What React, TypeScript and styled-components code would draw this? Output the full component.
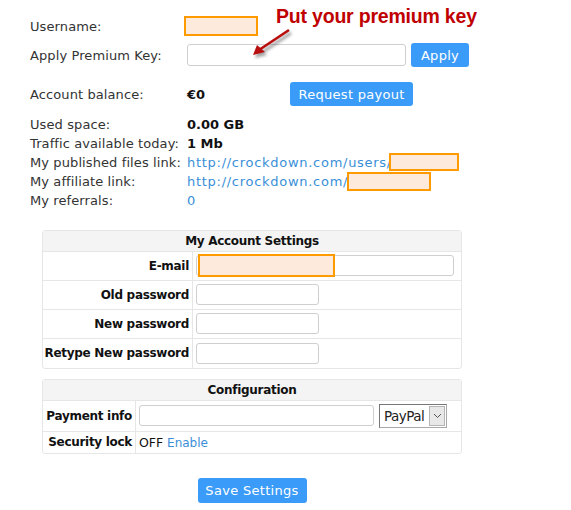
import React from "react";
import styled, { createGlobalStyle } from "styled-components";

const GlobalStyle = createGlobalStyle`
  html, body { margin: 0; padding: 0; background: #fff; }
  body {
    font-family: "DejaVu Sans", "Noto Sans", sans-serif;
    font-size: 13px;
    color: #333;
  }
`;

const Page = styled.div`
  position: relative;
  width: 571px;
  height: 510px;
  padding: 12px 0 0 30px;
  box-sizing: border-box;
  overflow: hidden;
`;

const Row = styled.div<{ $h: number; $mt?: number }>`
  display: flex;
  align-items: center;
  height: ${(p) => p.$h}px;
  margin-top: ${(p) => p.$mt ?? 0}px;
`;

const Label = styled.div`
  width: 157px;
  flex: none;
  white-space: nowrap;
  letter-spacing: 0.1px;
`;

const Value = styled.div<{ $bold?: boolean }>`
  display: flex;
  align-items: center;
  white-space: nowrap;
  font-weight: ${(p) => (p.$bold ? 700 : 400)};
  color: ${(p) => (p.$bold ? "#111" : "inherit")};
`;

const Link = styled.a<{ $wide?: boolean }>`
  color: #3a8fd8;
  text-decoration: none;
  white-space: nowrap;
  letter-spacing: ${(p) => (p.$wide ? "0.72px" : "0")};
`;

const Redact = styled.span<{ $w: number; $h: number; $ml?: number }>`
  display: inline-block;
  width: ${(p) => p.$w}px;
  height: ${(p) => p.$h}px;
  margin-left: ${(p) => p.$ml ?? 0}px;
  box-sizing: border-box;
  border: 2px solid #ff9a00;
  background: #fdeadd;
`;

const TextInput = styled.input<{ $w: number; $h?: number }>`
  width: ${(p) => p.$w}px;
  height: ${(p) => p.$h ?? 21}px;
  box-sizing: border-box;
  border: 1px solid #cfcfcf;
  border-radius: 3px;
  background: #fff;
  padding: 0 4px;
  margin: 0;
  font: inherit;
`;

const Button = styled.button<{ $w: number; $h: number }>`
  width: ${(p) => p.$w}px;
  height: ${(p) => p.$h}px;
  border: none;
  border-radius: 3px;
  background: #3b9bf8;
  color: #fff;
  font-family: "DejaVu Sans", sans-serif;
  font-size: 13px;
  letter-spacing: 0.3px;
  padding: 0;
  cursor: pointer;
`;

const Annotation = styled.div`
  position: absolute;
  left: 276px;
  top: 5px;
  font-family: "Liberation Sans", Arial, sans-serif;
  font-weight: 700;
  font-size: 19.5px;
  color: #c00000;
  letter-spacing: -0.2px;
`;

const ArrowSvg = styled.svg`
  position: absolute;
  left: 245px;
  top: 25px;
  overflow: visible;
`;

const Panel = styled.table<{ $mt: number }>`
  width: 420px;
  margin: ${(p) => p.$mt}px 0 0 12px;
  border-collapse: separate;
  border-spacing: 0;
  border: 1px solid #e6e6e6;
  border-radius: 3px;
  font-size: 12px;
  letter-spacing: -0.3px;
`;

const HeadCell = styled.th`
  height: 20px;
  padding: 0;
  background: #f4f4f4;
  color: #111;
  font-weight: 700;
  font-size: 12px;
  text-align: center;
  border-bottom: 1px solid #e6e6e6;
`;

const LabelCell = styled.td<{ $w: number; $h: number; $last?: boolean }>`
  width: ${(p) => p.$w}px;
  height: ${(p) => p.$h}px;
  padding: 0 3px 0 0;
  box-sizing: border-box;
  text-align: right;
  font-weight: 700;
  color: #111;
  white-space: nowrap;
  border-right: 1px solid #e6e6e6;
  border-bottom: ${(p) => (p.$last ? "none" : "1px solid #e6e6e6")};
`;

const FieldCell = styled.td<{ $last?: boolean }>`
  padding: 0 0 0 3px;
  white-space: nowrap;
  letter-spacing: 0;
  border-bottom: ${(p) => (p.$last ? "none" : "1px solid #e6e6e6")};
`;

const FieldLine = styled.div`
  position: relative;
  display: flex;
  align-items: center;
  gap: 5px;
`;

const EmailCover = styled(Redact)`
  position: absolute;
  left: 2px;
  top: -1px;
`;

const SelectWrap = styled.div`
  position: relative;
  width: 68px;
  height: 24px;
`;

const Select = styled.select`
  appearance: none;
  width: 68px;
  height: 24px;
  box-sizing: border-box;
  border: 1px solid #a9a9a9;
  border-top-color: #777;
  border-left-color: #777;
  background: #fff;
  font-family: "DejaVu Sans", sans-serif;
  font-size: 13.5px;
  color: #222;
  padding: 0 0 0 4px;
  margin: 0;
  letter-spacing: -0.5px;
`;

const SelectArrow = styled.span`
  position: absolute;
  right: 2px;
  top: 2px;
  width: 16px;
  height: 20px;
  box-sizing: border-box;
  border: 1px solid #b5b5b5;
  background: #e8e8e8;
  display: flex;
  align-items: center;
  justify-content: center;
  pointer-events: none;
`;

const Off = styled.span`
  color: #111;
  font-size: 12.5px;
`;

const SaveRow = styled.div`
  width: 420px;
  margin: 24px 0 0 12px;
  display: flex;
  justify-content: center;
`;

export default function App() {
  return (
    <>
      <GlobalStyle />
      <Page>
        <Annotation>Put your premium key</Annotation>
        <ArrowSvg width="50" height="36" viewBox="0 0 50 36">
          <defs>
            <filter id="sh" x="-50%" y="-50%" width="200%" height="200%">
              <feGaussianBlur stdDeviation="1.6" />
            </filter>
          </defs>
          <g transform="translate(2,3)" filter="url(#sh)" opacity="0.55">
            <line x1="44" y1="5" x2="14" y2="25" stroke="#555" strokeWidth="3" />
            <polygon points="8,30 12,20 20,27" fill="#555" />
          </g>
          <line x1="44" y1="5" x2="14" y2="25" stroke="#b80f0f" strokeWidth="2.6" />
          <polygon points="8,30 12,20 20,27" fill="#b80f0f" />
        </ArrowSvg>

        <Row $h={28}>
          <Label>Username:</Label>
          <Value>
            <Redact $w={74} $h={20} $ml={-3} />
          </Value>
        </Row>
        <Row $h={30}>
          <Label>Apply Premium Key:</Label>
          <Value>
            <TextInput $w={219} $h={22} />
            <Button $w={58} $h={24} style={{ marginLeft: 5 }}>
              Apply
            </Button>
          </Value>
        </Row>
        <Row $h={24} $mt={12}>
          <Label>Account balance:</Label>
          <Value $bold>€0</Value>
          <Button $w={123} $h={24} style={{ marginLeft: 85 }}>
            Request payout
          </Button>
        </Row>
        <Row $h={19} $mt={8.5}>
          <Label>Used space:</Label>
          <Value $bold>0.00 GB</Value>
        </Row>
        <Row $h={19}>
          <Label>Traffic available today:</Label>
          <Value $bold>1 Mb</Value>
        </Row>
        <Row $h={19}>
          <Label>My published files link:</Label>
          <Value>
            <Link href="#" $wide>http://crockdown.com/users/</Link>
            <Redact $w={70} $h={18} $ml={-3} />
          </Value>
        </Row>
        <Row $h={19}>
          <Label>My affiliate link:</Label>
          <Value>
            <Link href="#" $wide>http://crockdown.com/f</Link>
            <Redact $w={84} $h={19} $ml={-6} />
          </Value>
        </Row>
        <Row $h={19}>
          <Label>My referrals:</Label>
          <Value>
            <Link href="#">0</Link>
          </Value>
        </Row>

        <Panel $mt={20}>
          <thead>
            <tr>
              <HeadCell colSpan={2}>My Account Settings</HeadCell>
            </tr>
          </thead>
          <tbody>
            <tr>
              <LabelCell $w={150} $h={29}>E-mail</LabelCell>
              <FieldCell>
                <FieldLine>
                  <TextInput $w={258} />
                  <EmailCover $w={137} $h={23} />
                </FieldLine>
              </FieldCell>
            </tr>
            <tr>
              <LabelCell $w={150} $h={29}>Old password</LabelCell>
              <FieldCell>
                <TextInput type="password" $w={123} />
              </FieldCell>
            </tr>
            <tr>
              <LabelCell $w={150} $h={29}>New password</LabelCell>
              <FieldCell>
                <TextInput type="password" $w={123} />
              </FieldCell>
            </tr>
            <tr>
              <LabelCell $w={150} $h={29} $last>
                Retype New password
              </LabelCell>
              <FieldCell $last>
                <TextInput type="password" $w={123} />
              </FieldCell>
            </tr>
          </tbody>
        </Panel>

        <Panel $mt={10}>
          <thead>
            <tr>
              <HeadCell colSpan={2}>Configuration</HeadCell>
            </tr>
          </thead>
          <tbody>
            <tr>
              <LabelCell $w={93} $h={31}>Payment info</LabelCell>
              <FieldCell>
                <FieldLine>
                  <TextInput $w={235} />
                  <SelectWrap>
                    <Select defaultValue="paypal">
                      <option value="paypal">PayPal</option>
                    </Select>
                    <SelectArrow>
                      <svg width="9" height="6" viewBox="0 0 9 6">
                        <path d="M1 1 L4.5 4.5 L8 1" fill="none" stroke="#555" strokeWidth="1" />
                      </svg>
                    </SelectArrow>
                  </SelectWrap>
                </FieldLine>
              </FieldCell>
            </tr>
            <tr>
              <LabelCell $w={93} $h={21} $last>
                Security lock
              </LabelCell>
              <FieldCell $last>
                <Off>OFF</Off> <Link href="#">Enable</Link>
              </FieldCell>
            </tr>
          </tbody>
        </Panel>

        <SaveRow>
          <Button $w={109} $h={25}>
            Save Settings
          </Button>
        </SaveRow>
      </Page>
    </>
  );
}
